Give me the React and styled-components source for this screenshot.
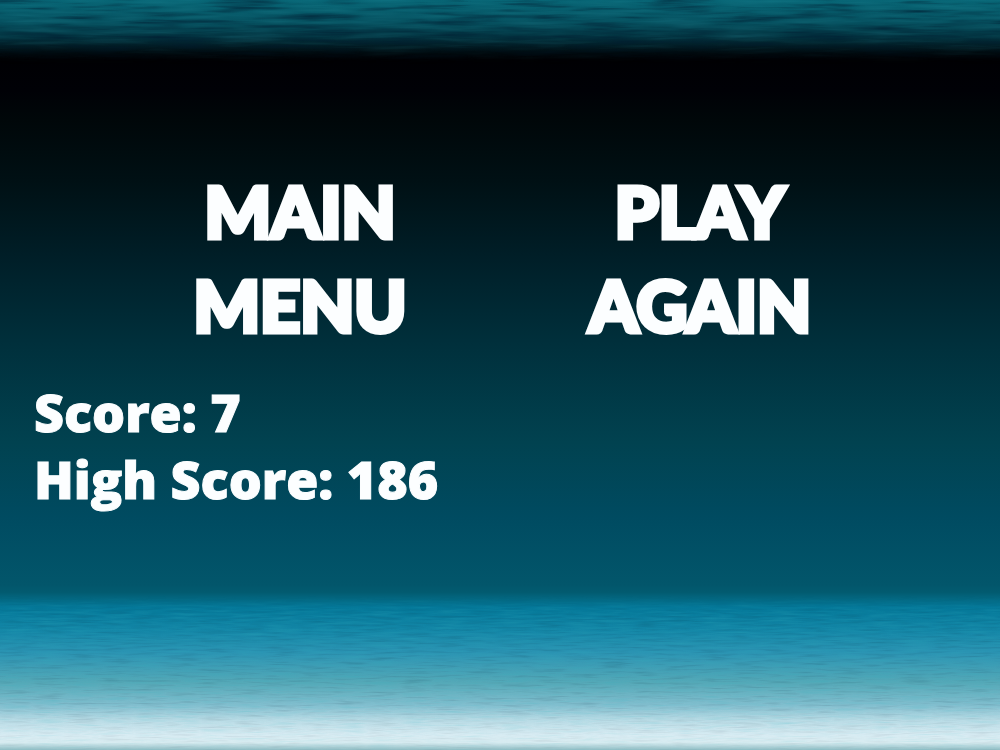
import React from "react";
import styled, { createGlobalStyle } from "styled-components";

const GlobalStyle = createGlobalStyle`
  * { box-sizing: border-box; }
  body { margin: 0; background: #02556b; }
`;

const Screen = styled.main`
  position: relative;
  min-height: 100vh;
  padding-top: 164px;
  overflow: hidden;
  color: #fcfeff;
  font-family: "Open Sans", "Liberation Sans", sans-serif;
  font-weight: 800;
  background: linear-gradient(
    to bottom,
    #086575 0%,
    #06505f 3%,
    #03323f 5%,
    #010b10 7%,
    #000003 8%,
    #000106 12%,
    #000709 16%,
    #001014 24%,
    #001e27 34%,
    #00303c 46%,
    #014250 59%,
    #004b61 69%,
    #02566b 78%,
    #025b70 79%,
    #05799a 81%,
    #1487a7 84%,
    #2b94b3 87%,
    #55a9b8 91%,
    #82bfcf 94%,
    #b9dce6 96%,
    #d8ecf3 98%,
    #d8ecf1 99%,
    #8fbdc4 100%
  );
`;

const Water = styled.svg`
  position: absolute;
  left: 0;
  width: 100%;
  pointer-events: none;
`;

const Surface = styled(Water)`
  top: 0;
  height: 64px;
  mask-image: linear-gradient(to bottom, #000 60%, transparent);
`;

const Shallows = styled(Water)`
  bottom: 0;
  height: 154px;
  mask-image: linear-gradient(to bottom, transparent, #000 12%, #000 70%, rgba(0, 0, 0, 0.5));
`;

const Menu = styled.nav`
  position: relative;
  display: grid;
  grid-template-columns: 1fr 1fr;
  padding: 0 10%;
`;

const MenuButton = styled.button`
  justify-self: center;
  width: min-content;
  padding: 0;
  border: 0;
  background: none;
  color: inherit;
  font-family: Lato, "Liberation Sans", sans-serif;
  font-weight: 900;
  font-size: 70px;
  line-height: 94px;
  text-transform: uppercase;
  -webkit-text-stroke: 5px currentColor;
  cursor: pointer;
`;

const Scores = styled.section`
  position: relative;
  padding: 26px 34px;
`;

const ScoreLine = styled.p`
  margin: 0;
  font-size: 52px;
  line-height: 67px;
  -webkit-text-stroke: 1px currentColor;
`;

function Ripples({ as: Band, id, frequency, light, dark, seed }) {
  return (
    <Band aria-hidden="true">
      <filter id={`${id}-dark`} x="0" y="0" width="100%" height="100%" colorInterpolationFilters="sRGB">
        <feTurbulence type="fractalNoise" baseFrequency={frequency} numOctaves="3" seed={seed} />
        <feColorMatrix values={`0 0 0 0 0  0 0 0 0 0.1  0 0 0 0 0.18  ${dark} 0 0 0 ${-dark / 2}`} />
      </filter>
      <filter id={`${id}-light`} x="0" y="0" width="100%" height="100%" colorInterpolationFilters="sRGB">
        <feTurbulence type="fractalNoise" baseFrequency={frequency} numOctaves="3" seed={seed} />
        <feColorMatrix values={`0 0 0 0 0.2  0 0 0 0 0.7  0 0 0 0 0.75  ${-light} 0 0 0 ${light / 2}`} />
      </filter>
      <rect width="100%" height="100%" filter={`url(#${id}-dark)`} />
      <rect width="100%" height="100%" filter={`url(#${id}-light)`} />
    </Band>
  );
}

export default function App() {
  return (
    <>
      <GlobalStyle />
      <Screen>
        <Ripples as={Surface} id="surface" frequency="0.014 0.2" dark={1.6} light={0.4} seed={4} />
        <Ripples as={Shallows} id="shallows" frequency="0.03 0.45" dark={0.3} light={0.5} seed={9} />
        <Menu aria-label="Game over menu">
          <MenuButton type="button">Main Menu</MenuButton>
          <MenuButton type="button">Play Again</MenuButton>
        </Menu>
        <Scores aria-label="Scores">
          <ScoreLine>Score: 7</ScoreLine>
          <ScoreLine>High Score: 186</ScoreLine>
        </Scores>
      </Screen>
    </>
  );
}
